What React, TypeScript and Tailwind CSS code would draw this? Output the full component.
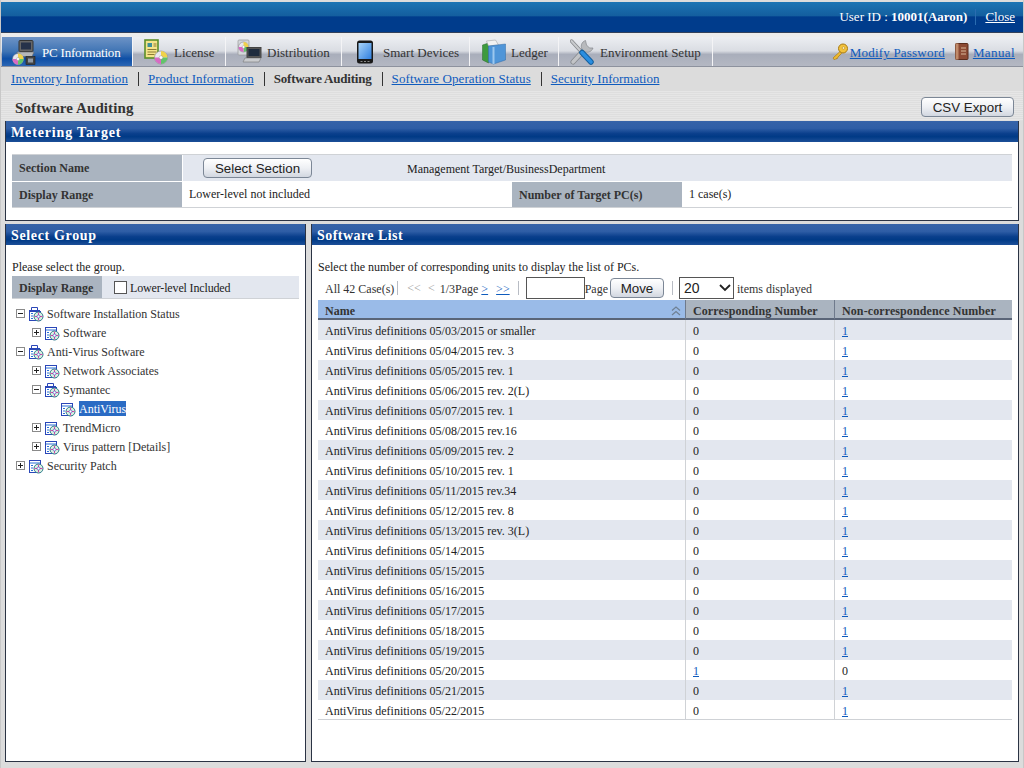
import React from 'react';

const rows: { name: string; a: string; b: string }[] = [
  { name: 'AntiVirus definitions 05/03/2015 or smaller', a: '0', b: '1' },
  { name: 'AntiVirus definitions 05/04/2015 rev. 3', a: '0', b: '1' },
  { name: 'AntiVirus definitions 05/05/2015 rev. 1', a: '0', b: '1' },
  { name: 'AntiVirus definitions 05/06/2015 rev. 2(L)', a: '0', b: '1' },
  { name: 'AntiVirus definitions 05/07/2015 rev. 1', a: '0', b: '1' },
  { name: 'AntiVirus definitions 05/08/2015 rev.16', a: '0', b: '1' },
  { name: 'AntiVirus definitions 05/09/2015 rev. 2', a: '0', b: '1' },
  { name: 'AntiVirus definitions 05/10/2015 rev. 1', a: '0', b: '1' },
  { name: 'AntiVirus definitions 05/11/2015 rev.34', a: '0', b: '1' },
  { name: 'AntiVirus definitions 05/12/2015 rev. 8', a: '0', b: '1' },
  { name: 'AntiVirus definitions 05/13/2015 rev. 3(L)', a: '0', b: '1' },
  { name: 'AntiVirus definitions 05/14/2015', a: '0', b: '1' },
  { name: 'AntiVirus definitions 05/15/2015', a: '0', b: '1' },
  { name: 'AntiVirus definitions 05/16/2015', a: '0', b: '1' },
  { name: 'AntiVirus definitions 05/17/2015', a: '0', b: '1' },
  { name: 'AntiVirus definitions 05/18/2015', a: '0', b: '1' },
  { name: 'AntiVirus definitions 05/19/2015', a: '0', b: '1' },
  { name: 'AntiVirus definitions 05/20/2015', a: '1', b: '0' },
  { name: 'AntiVirus definitions 05/21/2015', a: '0', b: '1' },
  { name: 'AntiVirus definitions 05/22/2015', a: '0', b: '1' },
];

const tree: { label: string; depth: number; toggle: '+' | '-' | ''; open?: boolean; selected?: boolean }[] = [
  { label: 'Software Installation Status', depth: 0, toggle: '-', open: true },
  { label: 'Software', depth: 1, toggle: '+' },
  { label: 'Anti-Virus Software', depth: 0, toggle: '-', open: true },
  { label: 'Network Associates', depth: 1, toggle: '+' },
  { label: 'Symantec', depth: 1, toggle: '-', open: true },
  { label: 'AntiVirus', depth: 2, toggle: '', selected: true },
  { label: 'TrendMicro', depth: 1, toggle: '+' },
  { label: 'Virus pattern [Details]', depth: 1, toggle: '+' },
  { label: 'Security Patch', depth: 0, toggle: '+' },
];

function Disc({ cx, cy, r }: { cx: number; cy: number; r: number }) {
  return (
    <g>
      <circle cx={cx} cy={cy} r={r} fill="#e8e8ee" stroke="#777" strokeWidth="0.5" />
      <path d={`M${cx} ${cy}L${cx} ${cy - r}A${r} ${r} 0 0 1 ${cx + r} ${cy}Z`} fill="#f0d24a" />
      <path d={`M${cx} ${cy}L${cx + r} ${cy}A${r} ${r} 0 0 1 ${cx} ${cy + r}Z`} fill="#62c46a" />
      <path d={`M${cx} ${cy}L${cx} ${cy + r}A${r} ${r} 0 0 1 ${cx - r} ${cy}Z`} fill="#d86ac4" />
      <circle cx={cx} cy={cy} r={r * 0.28} fill="#fff" stroke="#888" strokeWidth="0.4" />
    </g>
  );
}

function PcIcon() {
  return (
    <svg width="24" height="26" viewBox="0 0 24 26">
      <rect x="7" y="1.500" width="14" height="11" rx="1" fill="#666" stroke="#333" />
      <rect x="9" y="3.500" width="10" height="7" fill="#26324a" />
      <path d="M5 13h17l-2 4.500H6z" fill="#b5b7ba" stroke="#666" strokeWidth="0.6" />
      <rect x="14" y="17.500" width="9" height="8" fill="#444" stroke="#222" strokeWidth="0.6" />
      <rect x="16" y="19.500" width="5" height="4" fill="#909aa6" />
      <Disc cx={6} cy={20} r={5.500} />
    </svg>
  );
}

function LicenseIcon() {
  return (
    <svg width="24" height="26" viewBox="0 0 24 26">
      <rect x="1" y="1" width="13" height="18" fill="#f4e48a" stroke="#5c8f2a" strokeWidth="1.600" />
      <rect x="3.500" y="4" width="4.500" height="4" fill="#3e8f9a" />
      <path d="M9.500 5h3M9.500 7h3M3.500 10.500h9M3.500 13h9M3.500 15.500h7" stroke="#8a7a34" strokeWidth="1" />
      <Disc cx={17} cy={18.500} r={6.500} />
    </svg>
  );
}

function DistIcon() {
  return (
    <svg width="25" height="26" viewBox="0 0 25 26">
      <rect x="1" y="1" width="11" height="15" rx="1" fill="#d5d8dc" stroke="#999" strokeWidth="0.7" />
      <Disc cx={6.500} cy={8} r={5} />
      <rect x="10" y="8.500" width="14" height="10" fill="#555" stroke="#444" />
      <rect x="11.500" y="10" width="11" height="7" fill="#1f2c3e" />
      <path d="M8 19h16l-2 4H6z" fill="#c9cbce" stroke="#777" strokeWidth="0.6" />
    </svg>
  );
}

function PhoneIcon() {
  return (
    <svg width="16" height="24" viewBox="0 0 16 24">
      <rect x="0" y="0.500" width="16" height="23" rx="2.500" fill="#191919" />
      <defs>
        <linearGradient id="phone-screen" x1="0" y1="0" x2="1" y2="1">
          <stop offset="0" stopColor="#a9d4f8" />
          <stop offset="1" stopColor="#2f7fe0" />
        </linearGradient>
      </defs>
      <rect x="1.500" y="3" width="13" height="16" fill="url(#phone-screen)" />
      <path d="M3.500 21.500h2M7 21.500h2M10.500 21.500h2" stroke="#888" strokeWidth="1" />
    </svg>
  );
}

function LedgerIcon() {
  return (
    <svg width="24" height="26" viewBox="0 0 24 26">
      <path d="M0.500 6l6-2v20l-6-3z" fill="#3e9a3e" stroke="#2a6a2a" strokeWidth="0.5" />
      <path d="M4.500 2l9-1 3 5-10 1z" fill="#f2f2f2" stroke="#999" strokeWidth="0.5" />
      <path d="M6.500 7l17-2v16l-12 4-5-2z" fill="#4f95d8" stroke="#2f6aa8" strokeWidth="0.5" />
      <path d="M11.500 8v17" stroke="#9cc7ee" strokeWidth="2" />
    </svg>
  );
}

function ToolsIcon() {
  return (
    <svg width="24" height="26" viewBox="0 0 24 26">
      <path d="M3 23L15 10" stroke="#85888c" strokeWidth="5" strokeLinecap="round" />
      <path d="M3 23L15 10" stroke="#c2c4c7" strokeWidth="3.500" strokeLinecap="round" />
      <path d="M15.500 1.500A6 6 0 1 0 23 9L19.500 9 16.500 6Z" fill="#b8babd" stroke="#85888c" strokeWidth="0.7" />
      <path d="M1.500 2L11.500 13" stroke="#85888c" strokeWidth="3.500" strokeLinecap="round" />
      <path d="M1.500 2L11.500 13" stroke="#c9cbce" strokeWidth="2" strokeLinecap="round" />
      <path d="M12 13.500L21 23" stroke="#14609f" strokeWidth="5.500" strokeLinecap="round" />
      <path d="M12 13.500L21 23" stroke="#2a8ee0" strokeWidth="3.500" strokeLinecap="round" />
    </svg>
  );
}

function KeyIcon() {
  return (
    <svg width="18" height="18" viewBox="0 0 18 18" className="mr-[1px]">
      <circle cx="12" cy="5.500" r="4.500" fill="#f2c23c" stroke="#a87a14" />
      <circle cx="12.500" cy="5" r="1.300" fill="#fff3c0" stroke="#a87a14" strokeWidth="0.5" />
      <path d="M9 8.500L2 15l1.500 2L5 15.500l1 .5 1-2 3.500-3.500z" fill="#eeb92f" stroke="#a87a14" strokeWidth="0.7" />
    </svg>
  );
}

function BookIcon() {
  return (
    <svg width="14" height="17" viewBox="0 0 14 17">
      <rect x="0.500" y="0.500" width="12.500" height="16" rx="1" fill="#8c4a34" stroke="#5a2c1c" />
      <rect x="0.500" y="0.500" width="3" height="16" fill="#c08a6a" />
      <path d="M6 5h5M6 8h5M6 11h5" stroke="#d9b89a" strokeWidth="1" />
    </svg>
  );
}

function TreeIcon({ open }: { open?: boolean }) {
  return (
    <svg width="16" height="16" viewBox="0 0 16 16">
      {open && <path d="M3.500 4.500V1.500h6v3M1 4.500h11" fill="none" stroke="#2a46b8" strokeWidth="1" />}
      <rect x="1.500" y={open ? 5.500 : 2.500} width="11" height={open ? 9 : 12} fill="#fff" stroke="#2a46b8" />
      <path d={open ? 'M3 7.500h2M3 10h2M3 12.500h2' : 'M2 5h10M3 7.500h2M3 10h2M3 12.500h2'} stroke="#2a70d8" strokeWidth="1.200" />
      <circle cx="10.500" cy="10.500" r="4.500" fill="#d8f0e0" stroke="#2a7a8a" />
      <path d="M10.500 6.500v8M6.500 10.500h8" stroke="#d84aa8" strokeWidth="1" />
      <circle cx="10.500" cy="10.500" r="1.500" fill="#fff" stroke="#2a46b8" strokeWidth="0.600" />
    </svg>
  );
}

function Toggle({ kind }: { kind: '+' | '-' | '' }) {
  if (!kind) return <span className="w-[9px] h-[9px]" />;
  return (
    <svg width="9" height="9" viewBox="0 0 9 9" className="shrink-0">
      <rect x="0.500" y="0.500" width="8" height="8" fill="#fff" stroke="#8a8a8a" />
      <path d="M2 4.500h5" stroke="#222" />
      {kind === '+' && <path d="M4.500 2v5" stroke="#222" />}
    </svg>
  );
}

function NavTab({ icon, label, width, active, iconBox }: { icon: React.ReactNode; label: string; width: string; active?: boolean; iconBox: string }) {
  return (
    <div
      className={`${width} h-full flex items-center border-r border-[#f4f4f6] shrink-0 text-[13px] ${
        active
          ? 'bg-[linear-gradient(#6d93c6_0%,#3f74b4_50%,#0e4fa6_75%,#2b66b4_100%)] text-white tracking-[-0.2px]'
          : 'bg-[linear-gradient(#eceef2_0%,#dadde3_48%,#a9aebb_60%,#b4b8c3_100%)] text-[#333]'
      }`}
    >
      <span className={`${iconBox} flex justify-end shrink-0`}>{icon}</span>
      <span className="whitespace-nowrap pt-[2px]">{label}</span>
    </div>
  );
}

function PanelTitle({ children, className = '' }: { children: React.ReactNode; className?: string }) {
  return (
    <div className={`h-[21px] shrink-0 pl-[5px] pt-[1px] flex items-center text-white font-bold text-[14px] bg-[linear-gradient(#3663a8_0%,#2f5ea6_35%,#0a3f8c_60%,#003a86_75%,#1c4f98_100%)] ${className}`}>
      {children}
    </div>
  );
}

function AquaButton({ children, className }: { children: React.ReactNode; className: string }) {
  return (
    <button
      className={`${className} shrink-0 pt-[1px] rounded-[4px] border border-[#7c8796] bg-[linear-gradient(#ffffff,#eef0f4_50%,#d2d7e0)] text-[13.333px] text-[#222] leading-none font-['Liberation_Sans',Arial,sans-serif]`}
    >
      {children}
    </button>
  );
}

function A({ children, className = '' }: { children: React.ReactNode; className?: string }) {
  return <span className={`text-[#0f5bbd] underline ${className}`}>{children}</span>;
}

export default function App() {
  return (
    <div className="w-[1024px] h-[768px] overflow-hidden flex flex-col bg-[#dcdcdc] border-x border-x-[#c8c8c8] pt-[2px] text-[12px] text-[#222] font-['Liberation_Serif','Times_New_Roman',serif]">
      {/* header */}
      <div className="h-[31px] shrink-0 flex items-center justify-end pr-[8px] text-[13px] text-white border-b border-b-[#33415a] bg-[linear-gradient(#1c74b4_0%,#145f9f_45%,#003c8c_50%,#003c8c_100%)]">
        <span>User ID : <b>10001(Aaron)</b></span>
        <span className="h-[16px] w-px bg-[#2a6cb0] ml-[8px] mr-[9px]" />
        <span className="underline">Close</span>
      </div>
      <div className="h-[4px] shrink-0 bg-[#ececec]" />

      {/* tabs */}
      <div className="h-[30px] shrink-0 flex pl-px border-b border-b-[#8d929e] bg-[linear-gradient(#eceef2_0%,#dadde3_48%,#a9aebb_60%,#b4b8c3_100%)]">
        <NavTab active width="w-[131px]" iconBox="w-[40px] pr-[6px]" icon={<PcIcon />} label="PC Information" />
        <NavTab width="w-[93px]" iconBox="w-[41px] pr-[6px]" icon={<LicenseIcon />} label="License" />
        <NavTab width="w-[116px]" iconBox="w-[41px] pr-[5px]" icon={<DistIcon />} label="Distribution" />
        <NavTab width="w-[128px]" iconBox="w-[41px] pr-[10px]" icon={<PhoneIcon />} label="Smart Devices" />
        <NavTab width="w-[89px]" iconBox="w-[41px] pr-[5px]" icon={<LedgerIcon />} label="Ledger" />
        <NavTab width="w-[154px]" iconBox="w-[41px] pr-[6px]" icon={<ToolsIcon />} label="Environment Setup" />
        <div className="flex-1 flex items-center justify-end pr-[8px] text-[13px]">
          <KeyIcon />
          <A className="mr-[10px] pt-[3px] tracking-[0.2px]">Modify Password</A>
          <span className="mr-[4px] flex"><BookIcon /></span>
          <A className="pt-[3px] tracking-[0.4px]">Manual</A>
        </div>
      </div>

      {/* sub navigation */}
      <div className="h-[24px] shrink-0 flex items-center pl-[10px] text-[13px]">
        <A className="tracking-[0.05px]">Inventory Information</A>
        <span className="w-px h-[14px] bg-[#333] ml-[10px] mr-[9px]" />
        <A>Product Information</A>
        <span className="w-px h-[14px] bg-[#333] ml-[10px] mr-[9px]" />
        <b className="text-[#333] tracking-[-0.2px]">Software Auditing</b>
        <span className="w-px h-[14px] bg-[#333] ml-[10px] mr-[9px]" />
        <A className="tracking-[0.08px]">Software Operation Status</A>
        <span className="w-px h-[14px] bg-[#333] ml-[10px] mr-[9px]" />
        <A>Security Information</A>
      </div>

      {/* page title */}
      <div className="h-[30px] shrink-0 flex items-center justify-between pl-[14px] pr-[9px] bg-[repeating-linear-gradient(0deg,#dedede_0_1px,#e6e6e6_1px_2px)]">
        <b className="text-[15px] text-[#333] pt-[4px] tracking-[0.1px]">Software Auditing</b>
        <AquaButton className="w-[93px] h-[20px] mt-[2px]">CSV Export</AquaButton>
      </div>

      <div className="flex-1 flex flex-col gap-[3px] pl-[4px] pr-[4px]">
        {/* metering target */}
        <section className="h-[100px] flex flex-col bg-white border border-[#2b3344] border-t-0">
          <PanelTitle className="tracking-[0.85px]">Metering Target</PanelTitle>
          <div className="mx-[6px] mt-[12px] border-y border-y-[#cfd2d6] text-[12px]">
            <div className="h-[27px] flex border-b border-b-white bg-[#e3e7ef]">
              <div className="w-[171px] shrink-0 bg-[#aab4c0] flex items-center pl-[7px] font-bold text-[#333] border-r border-r-white">Section Name</div>
              <div className="pl-[20px] flex items-center">
                <AquaButton className="w-[109px] h-[20px]">Select Section</AquaButton>
              </div>
              <div className="pl-[95px] flex items-center pt-px">Management Target/BusinessDepartment</div>
            </div>
            <div className="h-[25px] flex">
              <div className="w-[171px] shrink-0 bg-[#aab4c0] flex items-center pl-[7px] font-bold text-[#333] border-r border-r-white">Display Range</div>
              <div className="w-[329px] shrink-0 pl-[6px] pb-[2px] flex items-center">Lower-level not included</div>
              <div className="w-[170px] shrink-0 bg-[#aab4c0] flex items-center pl-[7px] font-bold text-[#333]">Number of Target PC(s)</div>
              <div className="pl-[7px] pb-[1px] flex items-center">1 case(s)</div>
            </div>
          </div>
        </section>

        <div className="flex gap-[5px] h-[538px]">
          {/* group tree */}
          <section className="w-[301px] shrink-0 flex flex-col bg-white border border-[#2b3344] border-t-0">
            <PanelTitle className="tracking-[0.65px]">Select Group</PanelTitle>
            <div className="pl-[6px] pr-[6px] pt-[15px] flex flex-col">
              <div className="h-[16px] leading-[14px]">Please select the group.</div>
              <div className="h-[23px] flex bg-[#e3e7ef] border-b border-b-[#cfd2d6]">
                <div className="w-[90px] bg-[#aab4c0] flex items-center pl-[7px] pt-[2px] font-bold text-[#333]">Display Range</div>
                <div className="flex items-center pl-[12px]">
                  <span className="w-[13px] h-[13px] border border-[#555] bg-white mr-[3px]" />
                  <span className="pt-[1px] tracking-[-0.15px]">Lower-level Included</span>
                </div>
              </div>
              <div className="pt-[5px] pl-[4px] text-[#333]">
                {tree.map((n) => (
                  <div key={n.label} className={`h-[19px] flex items-center ${n.depth === 1 ? 'pl-[16px]' : n.depth === 2 ? 'pl-[32px]' : ''}`}>
                    <Toggle kind={n.toggle} />
                    <span className="ml-[3px] mr-[3px] flex"><TreeIcon open={n.open} /></span>
                    <span className={n.selected ? 'bg-[#2a6bc4] text-white h-[15px] leading-[16px]' : ''}>{n.label}</span>
                  </div>
                ))}
              </div>
            </div>
          </section>

          {/* software list */}
          <section className="flex-1 flex flex-col bg-white border border-[#2b3344] border-t-0">
            <PanelTitle className="tracking-[0.45px]">Software List</PanelTitle>
            <div className="pl-[6px] pr-[6px] pt-[15px] flex flex-col">
              <div className="h-[16px] leading-[14px]">Select the number of corresponding units to display the list of PCs.</div>
              <div className="h-[24px] flex items-center pl-[7px] text-[#333]">
                <span className="pt-[1px]">All 42 Case(s)</span>
                <span className="w-px h-[14px] bg-[#b8bcc4] mx-[3px]" />
                <span className="text-[#999] ml-[6px]">&lt;&lt;</span>
                <span className="text-[#999] ml-[7px]">&lt;</span>
                <span className="ml-[5px] pt-[1px]">1/3Page</span>
                <A className="ml-[3px] pt-[1px]">&gt;</A>
                <A className="ml-[8px] pt-[1px]">&gt;&gt;</A>
                <span className="w-px h-[14px] bg-[#b8bcc4] ml-[8px] mr-[7px]" />
                <span className="w-[59px] h-[22px] shrink-0 border border-[#555] bg-white" />
                <span className="pt-[1px]">Page</span>
                <AquaButton className="w-[54px] h-[20px] ml-[2px]">Move</AquaButton>
                <span className="w-px h-[14px] bg-[#b8bcc4] ml-[8px] mr-[6px]" />
                <span className="w-[55px] h-[22px] shrink-0 border border-[#555] bg-white flex items-center justify-between pl-[4px] pr-[2px] text-[14px] text-[#222] font-['Liberation_Sans',Arial,sans-serif]">
                  20
                  <svg width="12" height="8" viewBox="0 0 12 8"><path d="M1 1l5 5 5-5" fill="none" stroke="#222" strokeWidth="1.800" /></svg>
                </span>
                <span className="ml-[3px] pt-[1px]">items displayed</span>
              </div>
              <div className="grid grid-cols-[367px_149px_178px]">
                <div className="h-[20px] flex items-center justify-between pl-[7px] pr-[4px] pt-[3px] bg-[#9abbe8] border-b-2 border-b-[#5a6578] font-bold text-[#333]">
                  Name
                  <svg width="10" height="10" viewBox="0 0 10 10"><path d="M1 4.500l4-3.500 4 3.500M1 9l4-3.500L9 9" fill="none" stroke="#6f8094" strokeWidth="1.200" /></svg>
                </div>
                <div className="h-[20px] flex items-center pl-[7px] pt-[3px] bg-[#aab4c0] border-b-2 border-b-[#5a6578] border-l border-l-[#6f7a8c] font-bold text-[#333] tracking-[0.1px]">Corresponding Number</div>
                <div className="h-[20px] flex items-center pl-[7px] pt-[3px] bg-[#aab4c0] border-b-2 border-b-[#5a6578] border-l border-l-[#6f7a8c] font-bold text-[#333] tracking-[0.1px]">Non-correspondence Number</div>
                {rows.map((r, i) => {
                  const cell = `h-[20px] flex items-center pl-[7px] ${i % 2 === 0 ? 'bg-[#e3e7ef]' : 'bg-white'} ${i === rows.length - 1 ? 'pt-[2px] border-b border-b-[#cfd2d6]' : 'pt-[1px]'}`;
                  return (
                    <React.Fragment key={r.name}>
                      <div className={cell}>{r.name}</div>
                      <div className={`${cell} border-l border-l-[#cfd2d6]`}>{r.a === '1' ? <A>1</A> : r.a}</div>
                      <div className={`${cell} border-l border-l-[#cfd2d6]`}>{r.b === '1' ? <A>1</A> : r.b}</div>
                    </React.Fragment>
                  );
                })}
              </div>
            </div>
          </section>
        </div>
      </div>
    </div>
  );
}
